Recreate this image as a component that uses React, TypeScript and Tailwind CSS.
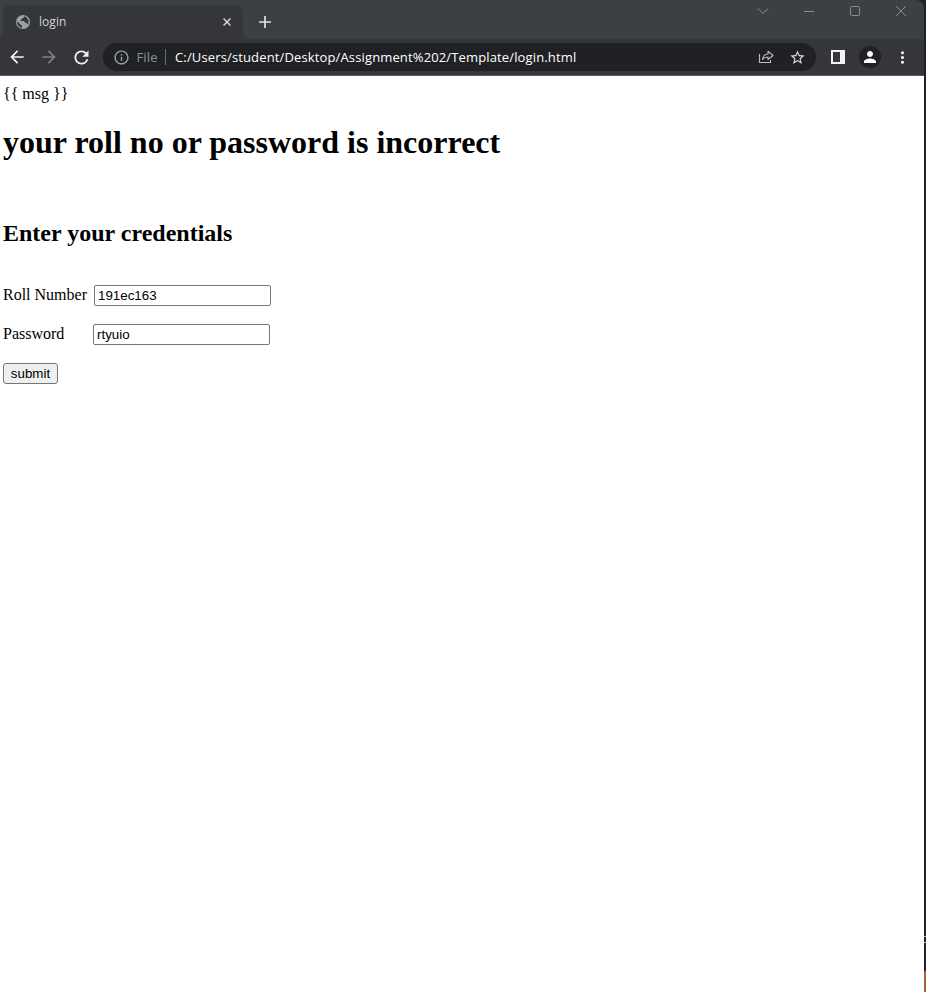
import React from "react";
import { MdArrowBack, MdArrowForward, MdRefresh, MdStarBorder, MdPerson, MdMoreVert, MdInfoOutline } from "react-icons/md";

function GlobeIcon() {
  return (
    <svg width="14" height="14" viewBox="0 0 14 14" className="block shrink-0">
      <circle cx="7" cy="7" r="7" fill="#9aa0a6" />
      <path d="M8 1.2C8 2.6 7.6 3 6.3 3.2C5.6 3.4 6 4.6 5 4.9C4.2 5.1 4.3 6 5 6H7.8C8.7 6.1 8.4 7.6 9.3 7.8H10.3C11.3 8 11 9.4 12 9.6C13.4 6.2 12 2 8 1.2Z" fill="#35363a" />
      <path d="M1.3 6.2L4.3 9.2C4.6 10.2 5.3 10.3 6 10.5V12.7C3 12.2 .9 9.6 1.3 6.2Z" fill="#35363a" />
    </svg>
  );
}

function TabStrip() {
  return (
    <div className="flex h-[39px] items-start bg-[#3c4043]">
      <div className="h-[39px] w-[3px] bg-[linear-gradient(#3c4043_33px,#35363a_39px)]" />
      <div className="mt-[5px] flex h-[34px] w-[240px] items-center rounded-t-lg bg-[#35363a] pl-[13px] pr-[12px]">
        <GlobeIcon />
        <span className="ml-[9px] flex-1 text-[12px] leading-4 tracking-[0.05px] text-[#d0d3d7]">login</span>
        <svg width="8" height="8" viewBox="0 0 8 8" stroke="#d0d3d6" strokeWidth="1.5">
          <path d="M.5 .5L7.5 7.5M7.5 .5L.5 7.5" />
        </svg>
      </div>
      <div className="flex h-[39px] w-2 flex-col justify-end bg-[#35363a]">
        <div className="h-[39px] rounded-bl-lg bg-[#3c4043]" />
      </div>
      <svg className="ml-2 mt-4" width="12" height="12" viewBox="0 0 12 12" stroke="#dee1e6" strokeWidth="1.7">
        <path d="M6 0V12M0 6H12" />
      </svg>
      <div className="ml-auto mr-[17px] mt-[5px] flex gap-[34px]">
        <svg width="12" height="12" viewBox="0 0 12 12" fill="none" stroke="#8b8e90"><path d="M1 3.5L6 8.5L11 3.5" /></svg>
        <svg width="12" height="12" viewBox="0 0 12 12" fill="none" stroke="#8b8e90"><path d="M1 6.5H11" /></svg>
        <svg width="12" height="12" viewBox="0 0 12 12" fill="none" stroke="#8b8e90"><rect x="1.5" y="1.5" width="9" height="9" rx="1" /></svg>
        <svg width="12" height="12" viewBox="0 0 12 12" fill="none" stroke="#8b8e90"><path d="M1 1L11 11M11 1L1 11" /></svg>
      </div>
    </div>
  );
}

function Toolbar() {
  return (
    <div className="flex h-[37px] items-center border-b border-[#5b585b] bg-[#35363a] pl-[7px]">
      <MdArrowBack size={20} color="#f1f3f4" />
      <MdArrowForward size={20} color="#808184" className="ml-[12px]" />
      <MdRefresh size={21} color="#f1f3f4" className="ml-[11.5px]" />
      <div className="ml-[11.5px] flex h-7 w-[713px] items-center rounded-full bg-[#202124] pl-[9.5px] pr-[10px]">
        <MdInfoOutline size={17} color="#9aa0a6" />
        <span className="ml-[7px] w-[20px] whitespace-nowrap text-[13px] leading-4 tracking-[0.15px] text-[#8b9096]">File</span>
        <span className="ml-[8.5px] h-4 w-px bg-[#6b6e72]" />
        <span className="ml-[9px] whitespace-nowrap text-[13px] leading-4 tracking-[0.14px] text-white">C:/Users/student/Desktop/Assignment%202/Template/login.html</span>
        <svg className="ml-auto" width="16" height="14" viewBox="0 0 16 14" fill="none" stroke="#b9bcc0" strokeWidth="1.1">
          <path d="M1.5 4V12.5H12.5V10" />
          <path d="M4.5 9.5C5 6 7 4 10 4V1.2L15 5.5L10 9.5V7C7.6 7 6 7.7 4.5 9.5Z" strokeLinejoin="round" />
        </svg>
        <MdStarBorder size={17} color="#d8dbdf" className="ml-[15px]" />
      </div>
      <svg className="ml-[15px]" width="14" height="14" viewBox="0 0 14 14">
        <path fillRule="evenodd" fill="#f1f3f4" d="M0 0H14V14H0ZM2 2V12H9V2Z" />
      </svg>
      <div className="ml-[14px] flex size-[22px] items-center justify-center rounded-full bg-[#202124]">
        <MdPerson size={18} color="#ffffff" />
      </div>
      <MdMoreVert size={19} color="#f1f3f4" className="ml-[12px]" />
    </div>
  );
}

const inputClass =
  "h-[21px] w-[177px] rounded-[2px] border border-[#767676] bg-white px-[3px] font-['Liberation_Sans',Arial,sans-serif] text-[13.333px] text-black outline-none";

function LoginPage() {
  return (
    <main className="flex-1 bg-white pl-[3px] pt-[9px] font-['Liberation_Serif','Times_New_Roman',serif] text-base leading-[18px] text-black">
      <p>{"{{ msg }}"}</p>
      <h1 className="mt-[21px] whitespace-nowrap text-[32px] font-bold leading-[37px]">your roll no or password is incorrect</h1>
      <h2 className="mt-[59px] text-2xl font-bold leading-[27px]">Enter your credentials</h2>
      <form className="mt-[38px]" onSubmit={(e) => e.preventDefault()}>
        <div className="flex h-[21px] items-baseline">
          <label htmlFor="roll" className="w-[91px]">Roll Number</label>
          <input id="roll" className={inputClass} defaultValue="191ec163" />
        </div>
        <div className="mt-[18px] flex h-[21px] items-baseline">
          <label htmlFor="pass" className="w-[90px]">Password</label>
          <input id="pass" className={inputClass} defaultValue="rtyuio" />
        </div>
        <button className="mt-[18px] block h-[21px] w-[55px] rounded-[3px] border border-[#767676] bg-[#efefef] font-['Liberation_Sans',Arial,sans-serif] text-[13.333px] leading-[19px]">submit</button>
      </form>
    </main>
  );
}

export default function App() {
  return (
    <div className="flex h-[992px] w-[926px] overflow-hidden bg-[#202124]">
      <div className="flex w-[924px] flex-col overflow-hidden rounded-tr-lg font-['Open_Sans','Noto_Sans',sans-serif]">
        <TabStrip />
        <Toolbar />
        <LoginPage />
      </div>
      <div className="flex w-[2px] flex-col justify-end bg-[#202124]">
        <div className="h-px bg-[#a9b4bd]" />
        <div className="mt-[5px] h-px bg-[#a9b4bd]" />
        <div className="mt-[28px] h-[21px] bg-[#a9603f]" />
      </div>
    </div>
  );
}
